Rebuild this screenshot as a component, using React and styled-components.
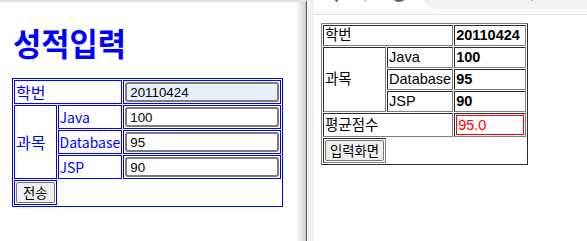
import React from 'react';
import styled, { createGlobalStyle } from 'styled-components';

const GlobalStyle = createGlobalStyle`
  html, body {
    margin: 0;
    padding: 0;
    background: #fff;
  }
`;

const Page = styled.div`
  display: flex;
  width: 587px;
  height: 241px;
  overflow: hidden;
  background: #fff;
`;

/* left browser window: the input form */
const LeftPane = styled.section`
  flex: none;
  width: 307px;
  box-sizing: border-box;
  border-top: 2px solid #dfe1e5;
  border-right: 1px solid #5a5a5a;
  padding: 24px 0 0 12px;
  background: linear-gradient(to right, rgba(0, 0, 0, 0) 296px, rgba(0, 0, 0, 0.2) 306px), #fff;
`;

const Title = styled.h1`
  margin: 0 0 20px 1px;
  font: 700 32px/32px "Noto Sans CJK KR", sans-serif;
  color: #0000ff;
  transform: scaleX(0.96);
  transform-origin: left center;
`;

const FormTable = styled.table`
  border: 1px solid #0000ff;
  border-spacing: 1px;
  font-family: "Noto Sans CJK KR", sans-serif;
`;

const FormCell = styled.td`
  border: 1px solid #0000ff;
  padding: 1px;
  color: #0000ff;
  font-size: ${p => (p.$latin ? '14px' : '16px')};
  line-height: 18px;
`;

const Field = styled.input`
  display: block;
  box-sizing: border-box;
  width: 154px;
  height: 20px;
  margin: 0;
  padding: 1px 3px;
  border: 2px solid #7b7b7b;
  border-radius: 3px;
  background: ${p => (p.$autofill ? '#e8f0fe' : '#fff')};
  font: 13.33px "Liberation Sans", Arial, sans-serif;
  color: #000;
  outline: none;
`;

const PlainButton = styled.button`
  display: block;
  margin: 0;
  padding: 1px ${p => p.$pad};
  height: 21px;
  border: 1px solid #767676;
  border-radius: 2px;
  background: #efefef;
  color: #000;
  font: 13.33px/17px "Noto Sans CJK KR", sans-serif;
`;

/* divider between the two windows */
const Gutter = styled.div`
  flex: none;
  width: 7px;
  background: #f1f1f1;
`;

/* right browser window: the result page */
const RightWindow = styled.section`
  flex: 1;
  display: flex;
  flex-direction: column;
  background: #fff;
  min-width: 0;
`;

const Toolbar = styled.div`
  flex: none;
  height: 14px;
  overflow: hidden;
  border-bottom: 1px solid #dadce0;
`;

const ToolbarRow = styled.div`
  display: flex;
  align-items: center;
  height: 28px;
  margin-top: -19px;
  padding-left: 15px;
`;

const NavIcon = styled.svg`
  flex: none;
  margin-right: ${p => p.$gap}px;
`;

const Omnibox = styled.div`
  flex: 1;
  display: flex;
  align-items: center;
  gap: 9px;
  height: 28px;
  padding-left: 7px;
  border-radius: 14px 0 0 14px;
  background: #f1f3f4;
  white-space: nowrap;
  overflow: hidden;
  font: 14px Roboto, "Liberation Sans", sans-serif;
  color: #202124;
`;

const Content = styled.div`
  padding: 8px 0 0 7px;
`;

const ResultTable = styled.table`
  border: 1px outset #808080;
  border-spacing: 1px;
  font: 14.5px/17px "Liberation Sans", "Noto Sans CJK KR", sans-serif;
  color: #000;
`;

const ResultCell = styled.td`
  border: 1px inset #808080;
  padding: 1px;
  font-weight: ${p => (p.$bold ? 700 : 400)};
`;

const Score = styled.div`
  box-sizing: border-box;
  width: 68px;
  height: 20px;
  border: 1px solid #ff0000;
  padding-left: 1px;
  color: #ff0000;
  line-height: 19px;
`;

const subjects = [
  { name: 'Java', score: '100' },
  { name: 'Database', score: '95' },
  { name: 'JSP', score: '90' },
];

const App = () => (
  <>
    <GlobalStyle />
    <Page>
      <LeftPane>
        <Title>성적입력</Title>
        <FormTable>
          <tbody>
            <tr>
              <FormCell colSpan={2}>학번</FormCell>
              <FormCell>
                <Field readOnly defaultValue="20110424" $autofill />
              </FormCell>
            </tr>
            {subjects.map((s, i) => (
              <tr key={s.name}>
                {i === 0 && <FormCell rowSpan={3}>과목</FormCell>}
                <FormCell $latin>{s.name}</FormCell>
                <FormCell>
                  <Field readOnly defaultValue={s.score} />
                </FormCell>
              </tr>
            ))}
            <tr>
              <FormCell>
                <PlainButton type="button" $pad="6px">전송</PlainButton>
              </FormCell>
            </tr>
          </tbody>
        </FormTable>
      </LeftPane>

      <Gutter />

      <RightWindow>
        <Toolbar>
          <ToolbarRow>
            <NavIcon width="16" height="16" viewBox="0 0 16 16" $gap={12} fill="none" stroke="#5f6368" strokeWidth="2">
              <path d="M15 8H2M8.5 1.5 2 8l6.5 6.5" />
            </NavIcon>
            <NavIcon width="16" height="16" viewBox="0 0 16 16" $gap={18} fill="none" stroke="#c4c7ca" strokeWidth="2">
              <path d="M1 8h13M7.5 1.5 14 8l-6.5 6.5" />
            </NavIcon>
            <NavIcon width="16" height="16" viewBox="0 0 16 16" $gap={16} fill="none" stroke="#5f6368" strokeWidth="2">
              <path d="M13.5 5.5A6 6 0 1 0 14 9" />
            </NavIcon>
            <Omnibox>
              <svg width="16" height="16" viewBox="0 0 16 16" fill="none" stroke="#5f6368" strokeWidth="1.6">
                <circle cx="8" cy="8" r="6.5" />
              </svg>
              <span>localhost:8080/JSPStudy/ch05/gradeResult.jsp</span>
            </Omnibox>
          </ToolbarRow>
        </Toolbar>

        <Content>
          <ResultTable>
            <tbody>
              <tr>
                <ResultCell colSpan={2}>학번</ResultCell>
                <ResultCell $bold>20110424</ResultCell>
              </tr>
              {subjects.map((s, i) => (
                <tr key={s.name}>
                  {i === 0 && <ResultCell rowSpan={3}>과목</ResultCell>}
                  <ResultCell>{s.name}</ResultCell>
                  <ResultCell $bold>{s.score}</ResultCell>
                </tr>
              ))}
              <tr>
                <ResultCell colSpan={2}>평균점수</ResultCell>
                <ResultCell>
                  <Score>95.0</Score>
                </ResultCell>
              </tr>
              <tr>
                <ResultCell>
                  <PlainButton type="button" $pad="4px">입력화면</PlainButton>
                </ResultCell>
              </tr>
            </tbody>
          </ResultTable>
        </Content>
      </RightWindow>
    </Page>
  </>
);

export default App;
